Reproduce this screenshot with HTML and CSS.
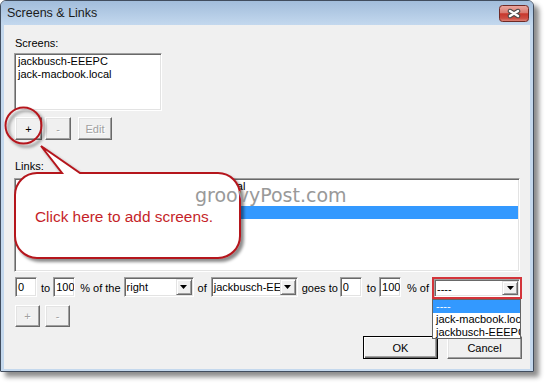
FILE: index.html
```html
<!DOCTYPE html>
<html>
<head>
<meta charset="utf-8">
<title>Screens &amp; Links</title>
<link rel="stylesheet" href="styles.css">
</head>
<body>
<div class="stage">
  <div class="window">
    <div class="titlebar">
      <span class="title">Screens &amp; Links</span>
      <svg class="close" width="30" height="17" viewBox="0 0 30 17">
        <defs>
          <linearGradient id="cg" x1="0" y1="0" x2="0" y2="1">
            <stop offset="0" stop-color="#eba9a1"/>
            <stop offset="0.45" stop-color="#d97a70"/>
            <stop offset="0.52" stop-color="#c8372c"/>
            <stop offset="0.8" stop-color="#cc4d42"/>
            <stop offset="1" stop-color="#e08a7e"/>
          </linearGradient>
        </defs>
        <rect x="0.5" y="0.5" width="29" height="16" rx="3" fill="url(#cg)" stroke="#6e2a26"/>
        <path d="M11 6 L19 11 M19 6 L11 11" stroke="#4a4a4a" stroke-width="4.5" stroke-linecap="round" fill="none"/>
        <path d="M11 6 L19 11 M19 6 L11 11" stroke="#fff" stroke-width="2.4" stroke-linecap="round" fill="none"/>
      </svg>
    </div>
    <div class="client">
      <div class="label">Screens:</div>
      <div class="listbox screens">
        <div class="item">jackbusch-EEEPC</div>
        <div class="item">jack-macbook.local</div>
      </div>
      <div class="btnrow">
        <div class="btn b-plus">+</div>
        <div class="btn b-minus dis">-</div>
        <div class="btn b-edit dis">Edit</div>
      </div>
      <div class="label links-label">Links:</div>
      <div class="listbox links">
        <div class="item">jackbusch-EEEPC is left of jack-macbook.local</div>
        <div class="item"></div>
        <div class="item sel"></div>
      </div>
      <div class="ctrlrow">
        <div class="field ml1">0</div>
        <span class="txt ml4">to</span>
        <div class="field ml3">100</div>
        <span class="txt ml5">% of the</span>
        <div class="combo w70 ml3"><span class="ctext">right</span><span class="arrow"><svg width="7" height="4" viewBox="0 0 7 4"><path d="M0 0 H7 L3.5 4 Z" fill="#000"/></svg></span></div>
        <span class="txt ml4">of</span>
        <div class="combo w87 ml4"><span class="ctext">jackbusch-EEEPC</span><span class="arrow"><svg width="7" height="4" viewBox="0 0 7 4"><path d="M0 0 H7 L3.5 4 Z" fill="#000"/></svg></span></div>
        <span class="txt ml4">goes to</span>
        <div class="field ml2">0</div>
        <span class="txt ml5">to</span>
        <div class="field ml3">100</div>
        <span class="txt ml6">% of</span>
        <div class="combo w86 ml5 hl"><span class="ctext">----</span><span class="arrow"><svg width="7" height="4" viewBox="0 0 7 4"><path d="M0 0 H7 L3.5 4 Z" fill="#000"/></svg></span></div>
      </div>
      <div class="btnrow2">
        <div class="btn b-sm dis">+</div>
        <div class="btn b-sm ml5 dis">-</div>
      </div>
      <div class="okrow">
        <div class="btn b-dlg def">OK</div>
        <div class="btn b-dlg ml9">Cancel</div>
      </div>
    </div>
  </div>

  <svg class="annot" width="550" height="388" viewBox="0 0 550 388">
    <defs>
      <filter id="sh" x="-15%" y="-15%" width="140%" height="140%">
        <feDropShadow dx="3" dy="3" stdDeviation="1.6" flood-color="#000" flood-opacity="0.45"/>
      </filter>
    </defs>
    <circle cx="23.5" cy="125.5" r="18" fill="none" stroke="#b5161e" stroke-width="2" filter="url(#sh)"/>
    <path d="M37 173 L62 173 L41 146 L80 173 L218 173 A22 22 0 0 1 240 195 L240 236 A22 22 0 0 1 218 258 L37 258 A22 22 0 0 1 15 236 L15 195 A22 22 0 0 1 37 173 Z" fill="#fff" stroke="#b5161e" stroke-width="2" filter="url(#sh)"/>
  </svg>
  <div class="callout-text">Click here to add screens.</div>
  <div class="watermark">groovyPost.com</div>
  <div class="droplist">
    <div class="item sel">----</div>
    <div class="item">jack-macbook.local</div>
    <div class="item">jackbusch-EEEPC</div>
  </div>
</div>
</body>
</html>
```

FILE: styles.css
```css
* { box-sizing: border-box; }
html, body { margin: 0; padding: 0; background: #fff; }
body {
  font-family: "Liberation Sans", Arial, sans-serif;
  font-size: 11px;
  color: #000;
}
.stage { position: relative; width: 550px; height: 388px; overflow: hidden; }

.window {
  width: 534px;
  height: 372px;
  border: 1px solid #414d5e;
  border-radius: 6px 6px 1px 1px;
  background: #c4d8ed;
  box-shadow: 5px 5px 5px rgba(0, 0, 0, 0.45);
  display: flex;
  flex-direction: column;
}
.titlebar {
  height: 24px;
  flex: none;
  display: flex;
  justify-content: space-between;
  align-items: flex-start;
  padding: 0 4px 0 6px;
  background: linear-gradient(#a2bddb, #c3d8ee);
  border-radius: 5px 5px 0 0;
}
.title { font-size: 12.5px; line-height: 15px; margin-top: 5px; color: #1b1b1b; }
.close { display: block; margin-top: 4px; }

.client {
  flex: 1;
  margin: 0 3px 2px 3px;
  background: #f0f0f0;
  padding: 12px 8px 0 10px;
}
.label { line-height: 13px; padding-left: 1px; }
.links-label { margin-top: 20px; }

.listbox {
  background: #fff;
  border: 1px solid;
  border-color: #a0a0a0 #fff #fff #a0a0a0;
  box-shadow: inset 1px 1px 0 #696969, inset -1px -1px 0 #e3e3e3;
  padding: 1px;
  overflow: hidden;
}
.screens { width: 148px; height: 58px; margin-top: 3px; }
.links { width: 506px; height: 94px; margin-top: 5px; }
.item { line-height: 13px; height: 13px; padding-left: 2px; white-space: nowrap; }
.item.sel { background: #3399ff; color: #fff; }

.btn {
  display: flex;
  align-items: center;
  justify-content: center;
  background: #f0f0f0;
  border: 1px solid;
  border-color: #fff #696969 #696969 #fff;
  box-shadow: inset -1px -1px 0 #a0a0a0, inset 1px 1px 0 #e3e3e3;
  height: 23px;
  white-space: nowrap;
}
.btn.dis { color: #a0a0a0; text-shadow: 1px 1px 0 #fff; }
.btn.def {
  border-color: #000;
  box-shadow: inset 1px 1px 0 #fff, inset -1px -1px 0 #696969, inset -2px -2px 0 #a0a0a0;
}
.btnrow { display: flex; margin-top: 6px; margin-left: 1px; }
.b-plus { width: 27px; }
.b-minus { width: 26px; margin-left: 3px; }
.b-edit { width: 34px; margin-left: 7px; }

.ctrlrow { display: flex; align-items: flex-start; margin-top: 5px; height: 20px; }
.field {
  width: 22px;
  height: 20px;
  background: #fff;
  border: 1px solid;
  border-color: #a0a0a0 #fff #fff #a0a0a0;
  box-shadow: inset 1px 1px 0 #696969, inset -1px -1px 0 #e3e3e3;
  padding: 2px 0 0 2px;
  line-height: 15px;
  white-space: nowrap;
  overflow: hidden;
}
.txt { line-height: 20px; padding-top: 1px; white-space: nowrap; }
.combo {
  height: 20px;
  display: flex;
  background: #fff;
  border: 1px solid;
  border-color: #a0a0a0 #fff #fff #a0a0a0;
  box-shadow: inset 1px 1px 0 #696969, inset -1px -1px 0 #e3e3e3;
  padding: 1px;
}
.ctext {
  flex: 1;
  min-width: 0;
  overflow: hidden;
  white-space: nowrap;
  padding: 1px 0 0 1px;
  line-height: 15px;
}
.arrow {
  flex: none;
  width: 16px;
  height: 100%;
  background: #f0f0f0;
  border: 1px solid;
  border-color: #e3e3e3 #696969 #696969 #e3e3e3;
  box-shadow: inset 1px 1px 0 #fff, inset -1px -1px 0 #a0a0a0;
  display: flex;
  align-items: center;
  justify-content: center;
}
.arrow svg { display: block; }
.w70 { width: 70px; }
.w87 { width: 87px; }
.w86 { width: 86px; }
.combo.hl { height: 18px; margin-top: 2px; outline: 2px solid #d3343a; }

.ml1 { margin-left: 1px; }
.ml2 { margin-left: 2px; }
.ml3 { margin-left: 3px; }
.ml4 { margin-left: 4px; }
.ml5 { margin-left: 5px; }
.ml6 { margin-left: 6px; }
.ml9 { margin-left: 9px; }

.btnrow2 { display: flex; margin-top: 8px; margin-left: 1px; }
.b-sm { width: 25px; height: 22px; }
.okrow { display: flex; justify-content: flex-end; margin-top: 9px; }
.b-dlg { width: 75px; height: 23px; }

.annot { position: absolute; left: 0; top: 0; pointer-events: none; }
.callout-text {
  position: absolute;
  left: 35px;
  top: 208px;
  font-size: 15.4px;
  line-height: 18px;
  color: #c51f29;
  white-space: nowrap;
}
.watermark {
  position: absolute;
  left: 195px;
  top: 186px;
  font-family: "DejaVu Sans", Verdana, sans-serif;
  font-size: 19px;
  line-height: 19px;
  color: #999;
  white-space: nowrap;
}
.droplist {
  position: absolute;
  left: 432px;
  top: 299px;
  width: 89px;
  height: 40px;
  background: #fff;
  border: 1px solid #646464;
  overflow: hidden;
}
.droplist .item { padding-left: 3px; }
```
